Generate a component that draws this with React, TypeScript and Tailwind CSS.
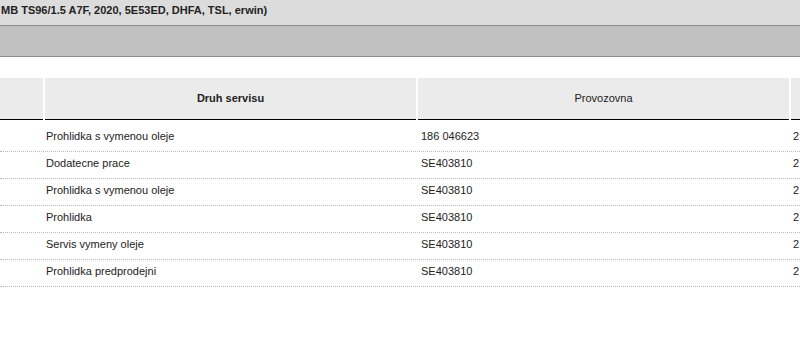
const rows = [
  { druh: "Prohlidka s vymenou oleje", provozovna: "186 046623" },
  { druh: "Dodatecne prace", provozovna: "SE403810" },
  { druh: "Prohlidka s vymenou oleje", provozovna: "SE403810" },
  { druh: "Prohlidka", provozovna: "SE403810" },
  { druh: "Servis vymeny oleje", provozovna: "SE403810" },
  { druh: "Prohlidka predprodejni", provozovna: "SE403810" },
];

function App() {
  return (
    <div className="w-[800px] h-[346px] overflow-hidden bg-white text-[11px] text-[#222] font-['Liberation_Sans',Arial,sans-serif]">
      <div className="h-[26px] bg-[#dcdcdc] border-b border-[#8c8c8c] pl-[1px] pt-[4px] leading-[13px] font-bold whitespace-nowrap">
        MB TS96/1.5 A7F, 2020, 5E53ED, DHFA, TSL, erwin)
      </div>
      <div className="h-[31px] bg-[#c0c0c0] border-b border-[#8c8c8c]" />

      <div className="mt-[21px] grid grid-cols-[43px_371px_371px_1fr] gap-x-[2px]">
        <div className="h-[42px] bg-[#ebebeb] border-b border-black" />
        <div className="h-[42px] bg-[#ebebeb] border-b border-black flex items-center justify-center font-bold">
          Druh servisu
        </div>
        <div className="h-[42px] bg-[#ebebeb] border-b border-black flex items-center justify-center">
          Provozovna
        </div>
        <div className="h-[42px] bg-[#ebebeb] border-b border-black" />
      </div>

      <div className="mt-[5px] flex flex-col">
        {rows.map((r, i) => (
          <div
            key={i}
            className="h-[27px] grid grid-cols-[43px_371px_371px_1fr] gap-x-[2px] border-b border-dotted border-[#b8b8b8] leading-[13px] pt-[5px]"
          >
            <div />
            <div className="pl-[1px] whitespace-nowrap">{r.druh}</div>
            <div className="pl-[3px] whitespace-nowrap">{r.provozovna}</div>
            <div className="pl-[2px]">2</div>
          </div>
        ))}
      </div>
    </div>
  );
}

export default App;
